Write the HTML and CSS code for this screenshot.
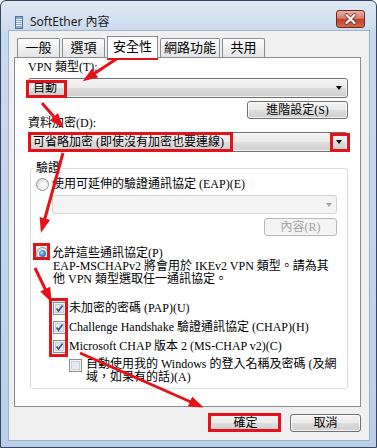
FILE: index.html
```html
<!DOCTYPE html>
<html>
    <head>
        <meta charset='UTF-8'>
        <link rel="stylesheet" href="styles.css">
    </head>
    <body>
        <div class="window">
            <div class="titlebar">
                <svg class="app-icon" width="8" height="13" viewBox="0 0 8 13">
                    <rect x="0.5" y="0.5" width="7" height="12" fill="#8fa9c9" stroke="#52709a"/>
                    <path d="M1 3.5h6M1 5.5h6M1 7.5h6M1 9.5h6" stroke="#e8eff8"/>
                </svg>
                <span class="title">SoftEther 內容</span>
                <div class="close">
                    <svg width="27" height="16" viewBox="0 0 27 16">
                        <path d="M9.5 4l8 8M17.5 4l-8 8" stroke="#7a2a20" stroke-width="3.8" stroke-linecap="round"/>
                        <path d="M9.5 4l8 8M17.5 4l-8 8" stroke="#fff" stroke-width="2.2" stroke-linecap="round"/>
                    </svg>
                </div>
            </div>
            <div class="client">
                <div class="tabs">
                    <div class="tab">一般</div>
                    <div class="tab">選項</div>
                    <div class="tab active">安全性</div>
                    <div class="tab">網路功能</div>
                    <div class="tab">共用</div>
                </div>
                <div class="panel">
                    <div class="label first">VPN 類型(T):</div>
                    <div class="combo"><span>自動</span><i class="drop"></i></div>
                    <div class="split-row">
                        <div class="label">資料加密(D):</div>
                        <div class="btn adv">進階設定(S)</div>
                    </div>
                    <div class="combo wide"><span>可省略加密 (即使沒有加密也要連線)</span><i class="drop"></i></div>
                    <fieldset class="group">
                        <legend>驗證</legend>
                        <div class="option eap"><span class="radio"></span>使用可延伸的驗證通訊協定 (EAP)(E)</div>
                        <div class="combo disabled"><i class="drop"></i></div>
                        <div class="btn disabled props">內容(R)</div>
                        <div class="option allow"><span class="radio on"></span>允許這些通訊協定(P)</div>
                        <p class="note">EAP-MSCHAPv2 將會用於 IKEv2 VPN 類型。請為其<br>他 VPN 類型選取任一通訊協定。</p>
                        <div class="option check first-check">
                            <svg class="box" width="13" height="13" viewBox="0 0 13 13"><rect x="0.5" y="0.5" width="12" height="12" fill="#f4f4f4" stroke="#8f8f8f"/><rect x="2.5" y="2.5" width="8" height="8" fill="#e6e9ef" stroke="#c9ced8"/><path d="M3.5 6.5l2 2.5l4-5.5" fill="none" stroke="#3d5496" stroke-width="1.7"/></svg>
                            未加密的密碼 (PAP)(U)
                        </div>
                        <div class="option check">
                            <svg class="box" width="13" height="13" viewBox="0 0 13 13"><rect x="0.5" y="0.5" width="12" height="12" fill="#f4f4f4" stroke="#8f8f8f"/><rect x="2.5" y="2.5" width="8" height="8" fill="#e6e9ef" stroke="#c9ced8"/><path d="M3.5 6.5l2 2.5l4-5.5" fill="none" stroke="#3d5496" stroke-width="1.7"/></svg>
                            Challenge Handshake 驗證通訊協定 (CHAP)(H)
                        </div>
                        <div class="option check">
                            <svg class="box" width="13" height="13" viewBox="0 0 13 13"><rect x="0.5" y="0.5" width="12" height="12" fill="#f4f4f4" stroke="#8f8f8f"/><rect x="2.5" y="2.5" width="8" height="8" fill="#e6e9ef" stroke="#c9ced8"/><path d="M3.5 6.5l2 2.5l4-5.5" fill="none" stroke="#3d5496" stroke-width="1.7"/></svg>
                            Microsoft CHAP 版本 2 (MS-CHAP v2)(C)
                        </div>
                        <div class="option auto">
                            <svg class="box" width="13" height="13" viewBox="0 0 13 13"><rect x="0.5" y="0.5" width="12" height="12" fill="#f4f4f4" stroke="#8f8f8f"/><rect x="2.5" y="2.5" width="8" height="8" fill="#e6e9ef" stroke="#c9ced8"/></svg>
                            <span>自動使用我的 Windows 的登入名稱及密碼 (及網<br>域，如果有的話)(A)</span>
                        </div>
                    </fieldset>
                </div>
                <div class="footer">
                    <div class="btn">確定</div>
                    <div class="btn">取消</div>
                </div>
            </div>

            <!-- red annotations drawn over the dialog -->
            <svg class="marks" width="377" height="448" viewBox="0 0 377 448">
                <defs>
                    <marker id="head" markerUnits="userSpaceOnUse" markerWidth="16" markerHeight="12" refX="11" refY="6" orient="auto">
                        <path d="M0 0.5L15 6L0 11.5z" fill="#e5121a"/>
                    </marker>
                </defs>
                <g fill="none" stroke="#e5121a" stroke-width="3">
                    <rect x="108.5" y="37.5" width="48" height="21"/>
                    <rect x="27.5" y="81.5" width="38" height="15"/>
                    <rect x="29.5" y="133.5" width="202" height="17"/>
                    <rect x="331.5" y="134.5" width="17" height="16"/>
                    <rect x="34.5" y="244.5" width="14" height="14"/>
                    <rect x="50.5" y="299.5" width="16" height="56"/>
                    <rect x="209.5" y="414.5" width="70" height="16"/>
                </g>
                <g stroke="#e5121a" stroke-width="3">
                    <line x1="121" y1="56" x2="86" y2="79" marker-end="url(#head)"/>
                    <line x1="42" y1="103" x2="61" y2="125" marker-end="url(#head)"/>
                    <line x1="63" y1="153" x2="42" y2="229" marker-end="url(#head)"/>
                    <line x1="35" y1="268" x2="50" y2="299" marker-end="url(#head)"/>
                    <line x1="80" y1="353" x2="200" y2="406" marker-end="url(#head)"/>
                </g>
            </svg>
        </div>
    </body>
</html>
```

FILE: styles.css
```css
* {
    box-sizing: border-box;
}

html, body {
    margin: 0;
    padding: 0;
}

body {
    width: 377px;
    height: 448px;
    overflow: hidden;
    background: #fff;
    font-family: "Liberation Serif", "Noto Sans CJK TC", serif;
    font-size: 12px;
    color: #000;
}

.window {
    position: relative;
    display: flex;
    flex-direction: column;
    width: 377px;
    height: 448px;
    border: 1px solid #34475f;
    border-radius: 6px 6px 0 0;
    background: linear-gradient(to bottom, #e0e9f5 0, #cadaee 30px, #c3d5ec 60%, #bccfe8 100%);
}

/* title bar */

.titlebar {
    display: flex;
    align-items: flex-start;
    height: 29px;
    padding: 0 11px 0 14px;
}

.app-icon {
    margin-top: 15px;
}

.title {
    margin: 13px 0 0 7px;
    font-family: "Noto Sans", "Noto Sans CJK TC", sans-serif;
    font-size: 12px;
    line-height: 16px;
    color: #1a1a1a;
}

.close {
    width: 29px;
    height: 18px;
    margin: 9px 0 0 auto;
    border: 1px solid #6b2a22;
    border-radius: 3px;
    background: linear-gradient(to bottom, #eab0a4 0, #d9806e 45%, #c4402c 52%, #d0684e 100%);
}

.close svg {
    display: block;
}

/* dialog body */

.client {
    display: flex;
    flex-direction: column;
    flex: 1;
    margin: 0 6px 6px 7px;
    border: 1px solid #9fb2c9;
    background: #f0f0f0;
}

.tabs {
    display: flex;
    align-items: flex-end;
    height: 26px;
    padding-left: 8px;
}

.tab {
    min-width: 43px;
    height: 19px;
    margin-right: 2px;
    padding: 0 3px;
    border: 1px solid #898c95;
    border-bottom: none;
    border-radius: 2px 2px 0 0;
    background: linear-gradient(to bottom, #fdfdfd, #e4e4e4);
    font-family: "Liberation Serif", "Noto Sans CJK TC", serif;
    font-size: 13px;
    line-height: 18px;
    text-align: center;
    white-space: nowrap;
}

.tab.active {
    position: relative;
    z-index: 1;
    height: 22px;
    margin-bottom: -1px;
    padding: 0 5px;
    background: #fff;
    line-height: 20px;
}

.panel {
    height: 350px;
    margin: 0 8px 0 5px;
    padding: 0 12px 0 13px;
    border: 1px solid #898c95;
    background: #fff;
}

.label {
    line-height: 14px;
    white-space: nowrap;
}

.label.first {
    margin-top: 2px;
}

.combo,
.btn {
    border: 1px solid #707070;
    border-radius: 3px;
    background: linear-gradient(to bottom, #f3f3f3 0, #ebebeb 50%, #dddddd 50%, #cfcfcf 100%);
    box-shadow: inset 0 0 0 1px rgba(255, 255, 255, .75);
}

.combo {
    display: flex;
    align-items: center;
    justify-content: space-between;
    height: 20px;
    margin-top: 4px;
    padding: 0 5px 0 4px;
    line-height: 14px;
    white-space: nowrap;
}

.combo.wide {
    margin-top: 2px;
}

.drop {
    width: 0;
    height: 0;
    border-left: 3.5px solid transparent;
    border-right: 3.5px solid transparent;
    border-top: 4px solid #000;
}

.btn {
    height: 18px;
    line-height: 16px;
    text-align: center;
    white-space: nowrap;
}

.split-row {
    display: flex;
    justify-content: space-between;
    height: 29px;
    margin-top: 3px;
}

.split-row .label {
    align-self: flex-end;
}

.btn.adv {
    width: 101px;
}

/* authentication group */

.group {
    margin: 9px 0 0 2px;
    padding: 0 10px 4px 5px;
    border: 1px solid #d5dfe5;
    border-radius: 3px;
    min-inline-size: 0;
}

.group legend {
    margin-left: -2px;
    padding: 0 2px;
    line-height: 14px;
}

.option {
    display: flex;
    align-items: center;
    gap: 3px;
    height: 14px;
    line-height: 14px;
    white-space: nowrap;
}

.option.eap {
    margin-top: 2px;
}

.radio {
    position: relative;
    flex: none;
    width: 13px;
    height: 13px;
    border: 1px solid #8e8f8f;
    border-radius: 50%;
    background: radial-gradient(circle at 65% 70%, #ffffff 0, #f2f2f2 40%, #d2d2d2 100%);
}

.radio.on::after {
    content: "";
    position: absolute;
    left: 2px;
    top: 2px;
    width: 7px;
    height: 7px;
    border-radius: 50%;
    background: radial-gradient(circle at 40% 40%, #bfe6ff 0, #3b8fd3 45%, #114f8a 100%);
}

.combo.disabled {
    justify-content: flex-end;
    height: 19px;
    margin: 4px 0 0 16px;
    padding-right: 4px;
    border-color: #d3d3d3;
    background: #f4f4f4;
    box-shadow: none;
}

.combo.disabled .drop {
    border-top-color: #a6a6a6;
}

.btn.props {
    width: 73px;
    margin: 4px 0 0 auto;
}

.btn.disabled {
    border-color: #b5b9bc;
    background: #f4f4f4;
    box-shadow: none;
    color: #a3a3a3;
}

.option.allow {
    margin-top: 10px;
}

.note {
    margin: 0 0 0 17px;
    line-height: 13px;
    white-space: nowrap;
}

.box {
    flex: none;
}

.option.check {
    margin: 5px 0 0 17px;
}

.option.first-check {
    margin-top: 15px;
}

.option.auto {
    align-items: flex-start;
    gap: 4px;
    height: auto;
    margin: 5px 0 0 33px;
    line-height: 13px;
}

.option.auto .box {
    margin-top: 1px;
}

.footer {
    display: flex;
    justify-content: flex-end;
    gap: 9px;
    margin-top: 7px;
    padding-right: 8px;
}

.footer .btn {
    width: 71px;
}

.marks {
    position: absolute;
    left: -1px;
    top: -1px;
    pointer-events: none;
}
```
